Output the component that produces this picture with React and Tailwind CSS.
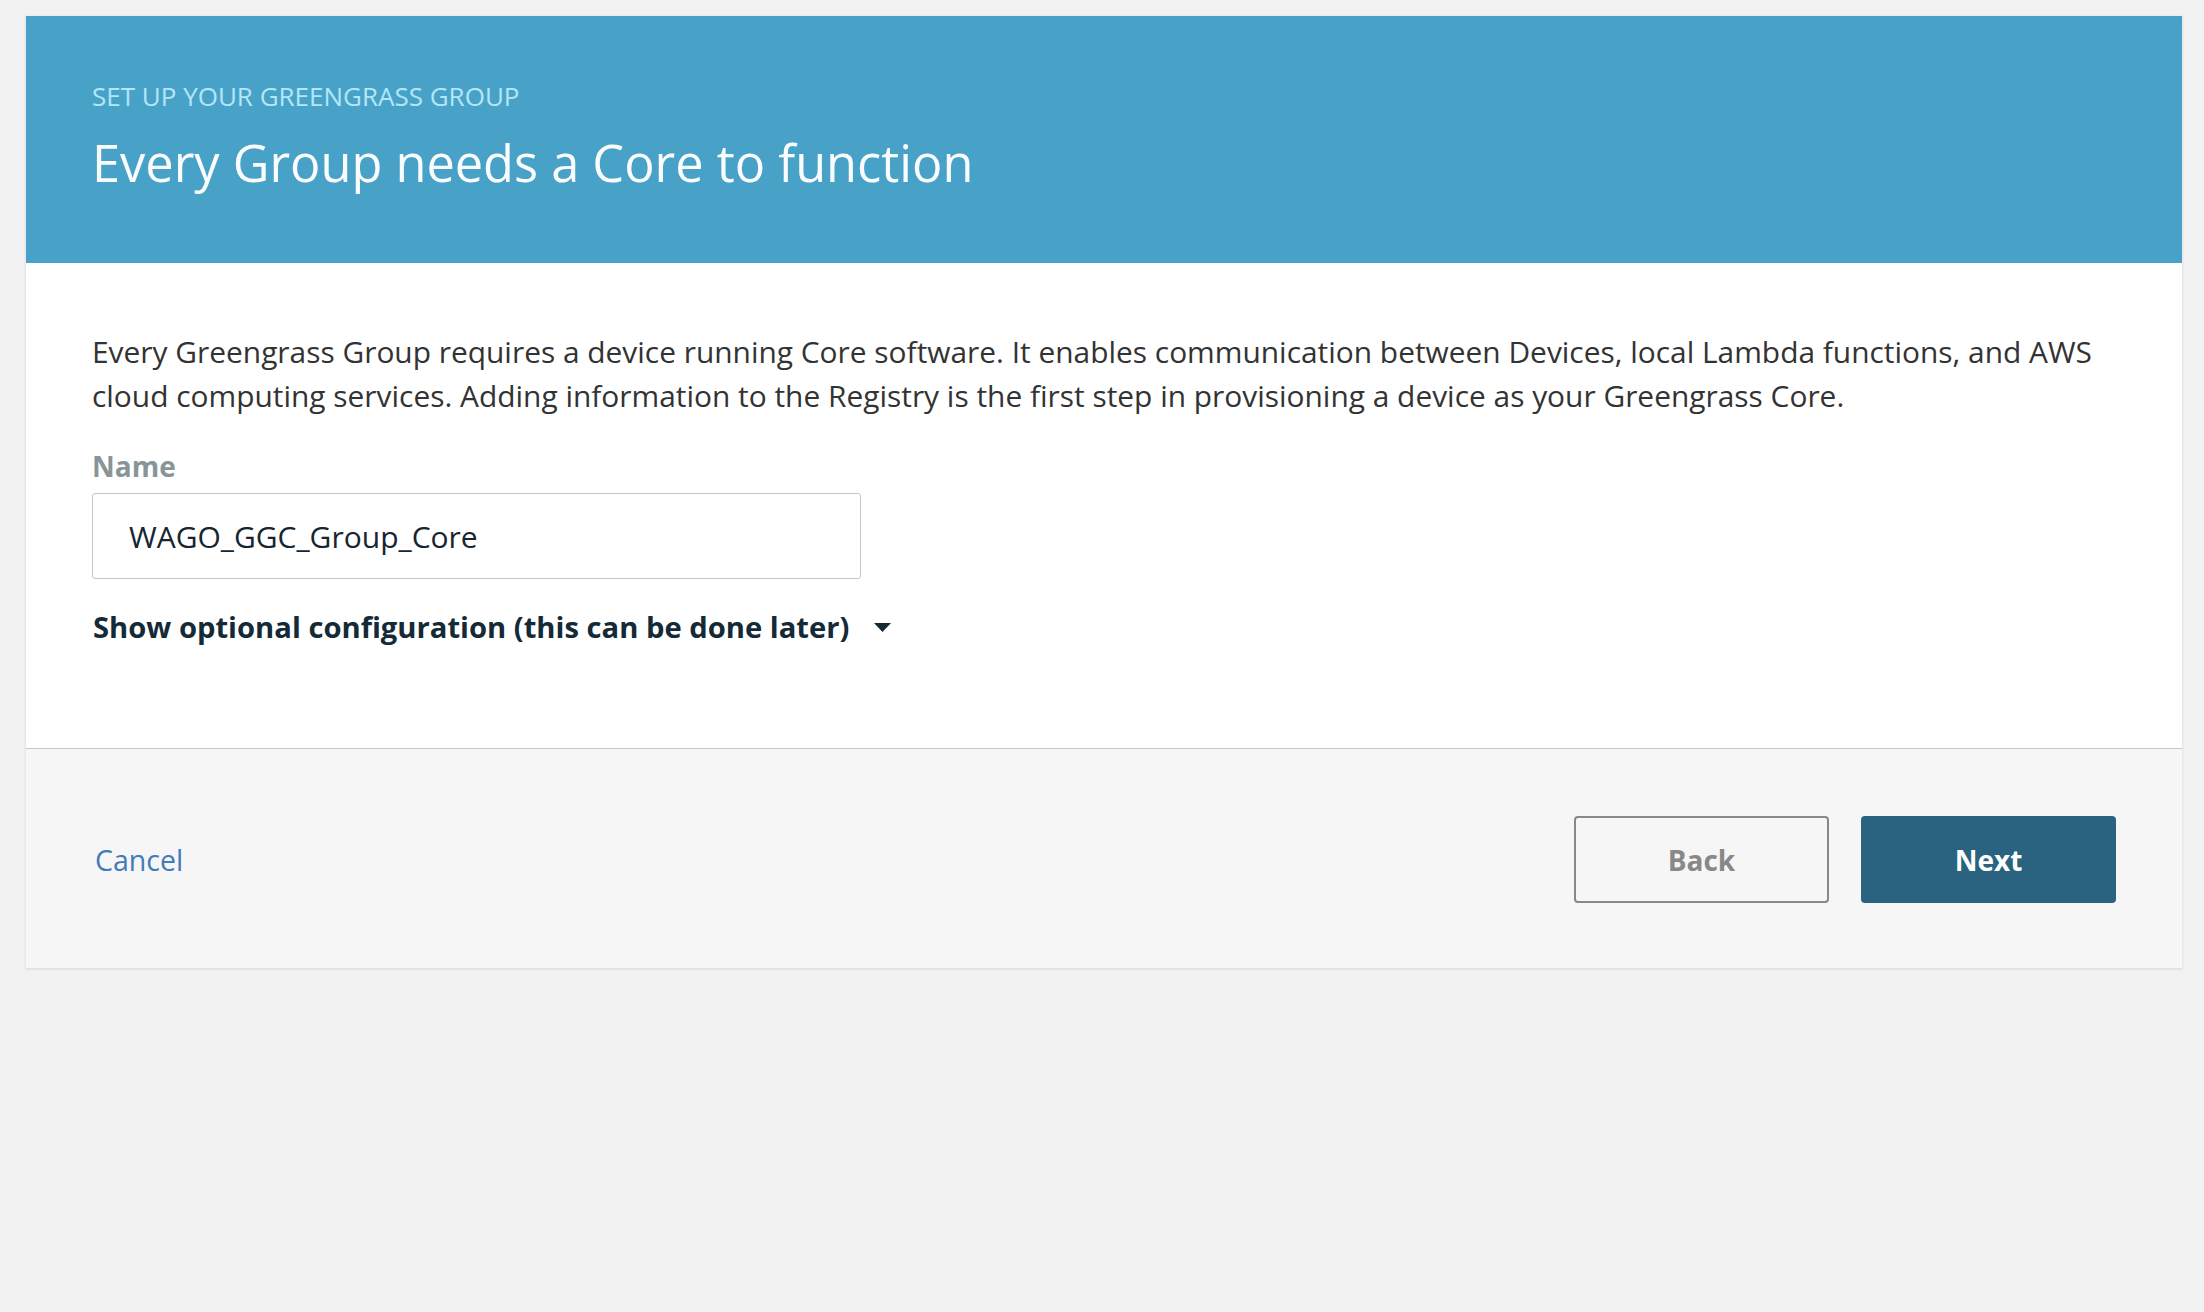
export default function App() {
  return (
    <div className="min-h-[1312px] bg-[#f2f2f2] pt-[16px] font-['Open_Sans',sans-serif]">
      <div className="ml-[26px] w-[2156px] bg-white shadow-[0_1px_3px_rgba(0,0,0,0.12)]">
        {/* header */}
        <div className="bg-[#48a2c8] px-[66px] pt-[62px] pb-[70px]">
          <div className="text-[26px] leading-[36px] text-[#b3e6f7]">SET UP YOUR GREENGRASS GROUP</div>
          <h1 className="mt-[19px] text-[50.5px] leading-[60px] text-[#fafbfc]">Every Group needs a Core to function</h1>
        </div>

        {/* body */}
        <div className="px-[66px] pt-[67px] pb-[99px]">
          <p className="text-[29.9px] leading-[44px] text-[#333333]">
            Every Greengrass Group requires a device running Core software. It enables communication between Devices, local Lambda functions, and AWS
            <br />
            cloud computing services. Adding information to the Registry is the first step in provisioning a device as your Greengrass Core.
          </p>
          <label className="mt-[26px] block text-[28px] font-bold leading-[44px] text-[#879596]">Name</label>
          <input
            type="text"
            defaultValue="WAGO_GGC_Group_Core"
            className="mt-[5px] block h-[86px] w-[769px] rounded-[3px] border border-[#c7c7c7] bg-white px-[36px] text-[30px] text-[#16252f] outline-none"
          />
          <button type="button" className="mt-[26px] ml-[1px] flex items-center gap-[25px] text-[29.2px] font-bold leading-[44px] text-[#142a37]">
            <span>Show optional configuration (this can be done later)</span>
            <svg width="17" height="9" viewBox="0 0 17 9">
              <path d="M0 0h17L8.5 9z" fill="#142a37" />
            </svg>
          </button>
        </div>

        {/* footer */}
        <div className="flex items-center justify-between border-t border-[#c8c8c8] bg-[#f6f6f6] px-[66px] pt-[67px] pb-[65px]">
          <a href="#" className="ml-[3px] text-[28.5px] leading-[44px] text-[#427bb7]">Cancel</a>
          <div className="flex gap-[32px]">
            <button type="button" className="h-[87px] w-[255px] rounded-[4px] border-2 border-[#888888] text-[28px] font-bold text-[#888888]">
              Back
            </button>
            <button type="button" className="h-[87px] w-[255px] rounded-[4px] bg-[#2a637f] text-[28px] font-bold text-white">
              Next
            </button>
          </div>
        </div>
      </div>
    </div>
  );
}
